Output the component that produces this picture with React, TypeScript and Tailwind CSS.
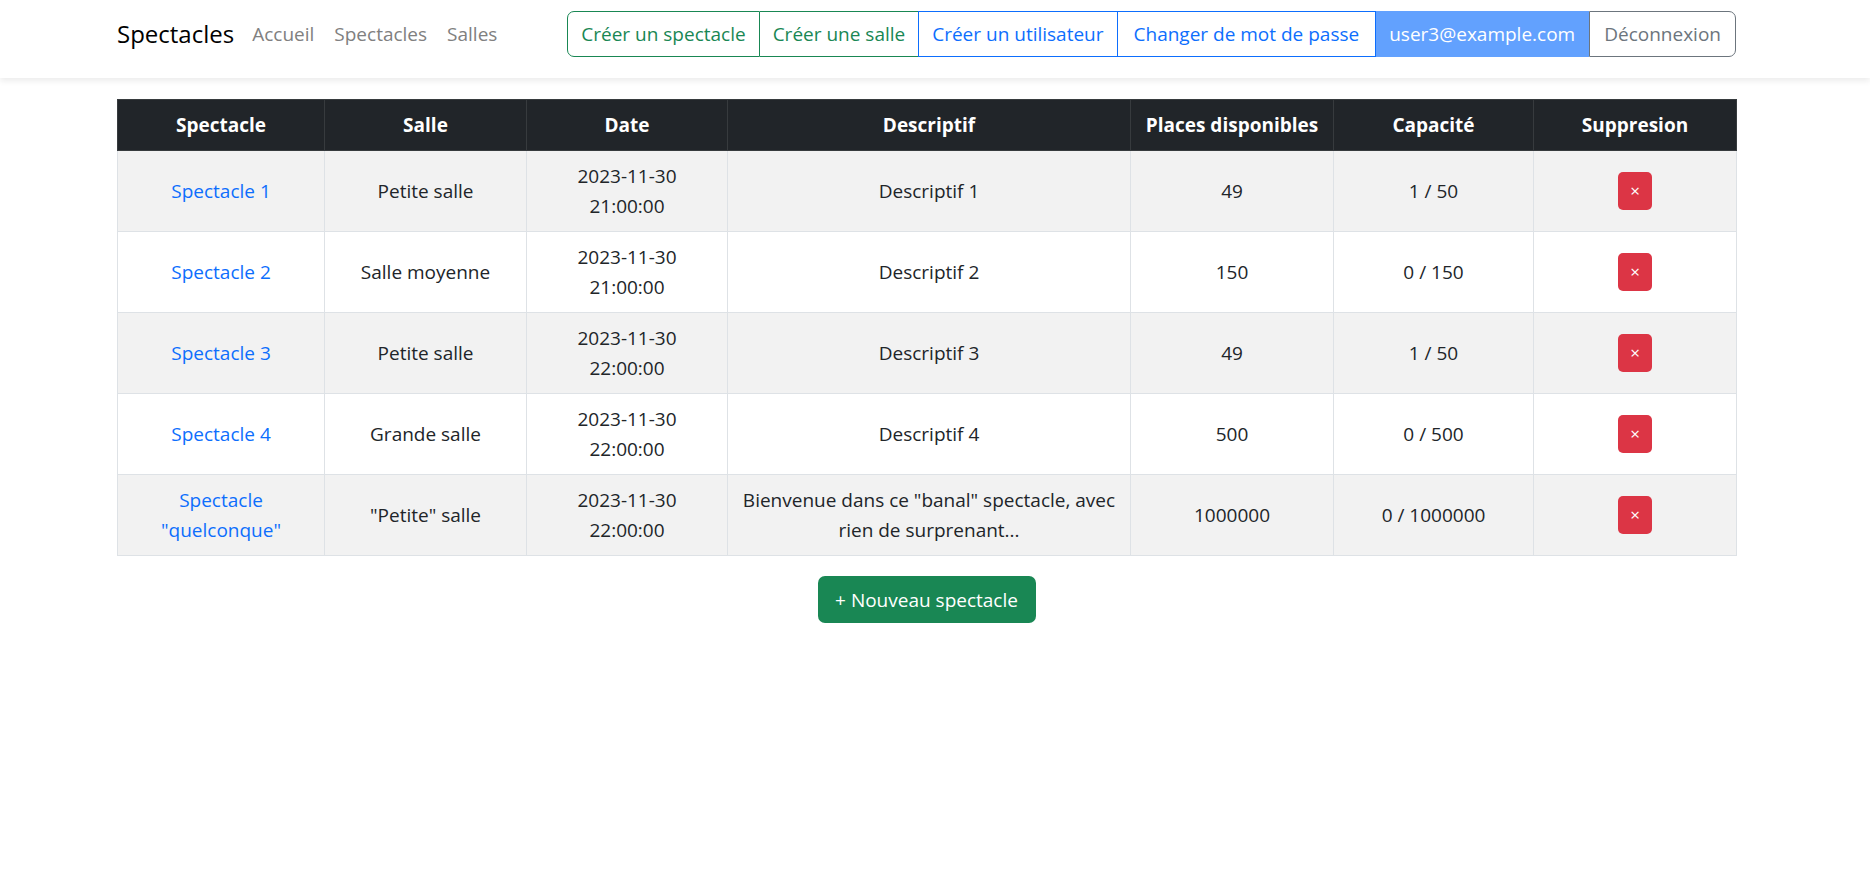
import React from "react";

type Show = {
  name: string[];
  salle: string;
  date: string;
  time: string;
  desc: string[];
  places: string;
  cap: string;
};

const shows: Show[] = [
  { name: ["Spectacle 1"], salle: "Petite salle", date: "2023-11-30", time: "21:00:00", desc: ["Descriptif 1"], places: "49", cap: "1 / 50" },
  { name: ["Spectacle 2"], salle: "Salle moyenne", date: "2023-11-30", time: "21:00:00", desc: ["Descriptif 2"], places: "150", cap: "0 / 150" },
  { name: ["Spectacle 3"], salle: "Petite salle", date: "2023-11-30", time: "22:00:00", desc: ["Descriptif 3"], places: "49", cap: "1 / 50" },
  { name: ["Spectacle 4"], salle: "Grande salle", date: "2023-11-30", time: "22:00:00", desc: ["Descriptif 4"], places: "500", cap: "0 / 500" },
  {
    name: ["Spectacle", "\"quelconque\""],
    salle: "\"Petite\" salle",
    date: "2023-11-30",
    time: "22:00:00",
    desc: ["Bienvenue dans ce \"banal\" spectacle, avec", "rien de surprenant..."],
    places: "1000000",
    cap: "0 / 1000000",
  },
];

const cols = ["w-[207px]", "w-[202px]", "w-[201px]", "w-[403px]", "w-[203px]", "w-[200px]", "w-[203px]"];
const heads = ["Spectacle", "Salle", "Date", "Descriptif", "Places disponibles", "Capacité", "Suppresion"];

const App: React.FC = () => {
  return (
    <div className="min-h-screen bg-white text-[#212529] font-['Open_Sans',sans-serif] text-[19px] leading-[30px]">
      {/* Navbar */}
      <nav className="h-[78px] bg-white shadow-[0_3px_6px_rgba(0,0,0,0.08)]">
        <div className="pl-[117px] pr-[134px] pt-[11px] flex items-start justify-between">
          <div className="flex items-center h-[46px]">
            <span className="text-[24px] text-black mr-[8px]">Spectacles</span>
            <a className="px-[10px] text-[#808080]">Accueil</a>
            <a className="px-[10px] text-[#808080]">Spectacles</a>
            <a className="px-[10px] text-[#808080]">Salles</a>
          </div>
          <div className="flex h-[46px]">
            <button className="px-[13px] border border-[#198754] text-[#198754] rounded-l-[7px]">Créer un spectacle</button>
            <button className="px-[13px] border border-l-0 border-r-0 border-[#198754] text-[#198754]">Créer une salle</button>
            <button className="px-[13px] border border-[#0d6efd] text-[#0d6efd]">Créer un utilisateur</button>
            <button className="px-[16px] border border-l-0 border-[#0d6efd] text-[#0d6efd]">Changer de mot de passe</button>
            <button className="px-[13px] border border-l-0 border-[#62a1fe] bg-[#62a1fe] text-white">user3@example.com</button>
            <button className="px-[14px] border border-[#6c757d] text-[#6c757d] rounded-r-[7px]">Déconnexion</button>
          </div>
        </div>
      </nav>

      {/* Table */}
      <main className="pl-[117px] pr-[134px] pt-[21px]">
        <table className="w-[1619px] border-collapse text-center table-fixed">
          <thead>
            <tr className="bg-[#212529] text-white font-bold h-[51px]">
              {heads.map((h, i) => (
                <th key={h} className={`${cols[i]} border border-[#373b3e] px-[10px] font-bold`}>
                  {h}
                </th>
              ))}
            </tr>
          </thead>
          <tbody>
            {shows.map((s, idx) => (
              <tr key={idx} className={idx % 2 === 0 ? "bg-[#f2f2f2] h-[81px]" : "bg-white h-[81px]"}>
                <td className="border border-[#dee2e6] px-[10px] py-[10px] text-[#0d6efd]">
                  {s.name.map((l) => (
                    <div key={l}>{l}</div>
                  ))}
                </td>
                <td className="border border-[#dee2e6] px-[10px] py-[10px]">{s.salle}</td>
                <td className="border border-[#dee2e6] px-[10px] py-[10px]">
                  <div>{s.date}</div>
                  <div>{s.time}</div>
                </td>
                <td className="border border-[#dee2e6] px-[10px] py-[10px]">
                  {s.desc.map((l) => (
                    <div key={l}>{l}</div>
                  ))}
                </td>
                <td className="border border-[#dee2e6] px-[10px] py-[10px]">{s.places}</td>
                <td className="border border-[#dee2e6] px-[10px] py-[10px]">{s.cap}</td>
                <td className="border border-[#dee2e6] px-[10px] py-[10px]">
                  <button className="mx-auto flex items-center justify-center w-[34px] h-[38px] rounded-[5px] bg-[#dc3545] text-white text-[17px]">
                    ×
                  </button>
                </td>
              </tr>
            ))}
          </tbody>
        </table>
        <div className="flex justify-center w-[1619px] mt-[20px]">
          <button className="h-[47px] w-[218px] rounded-[7px] bg-[#198754] text-white">+ Nouveau spectacle</button>
        </div>
      </main>
    </div>
  );
};

export default App;
